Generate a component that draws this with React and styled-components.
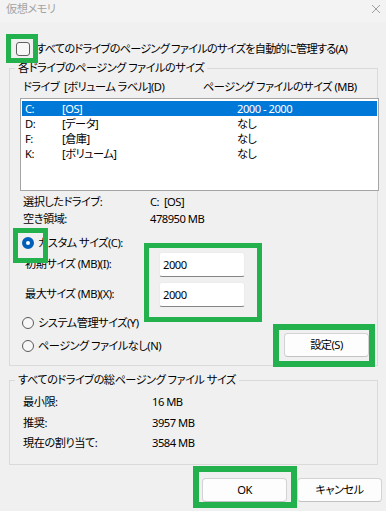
import styled, { createGlobalStyle } from "styled-components";

const Global = createGlobalStyle`
  html, body {
    margin: 0;
    padding: 0;
    background: #f0f0f0;
  }
  * {
    box-sizing: border-box;
  }
`;

const Window = styled.div`
  position: relative;
  width: 386px;
  height: 511px;
  overflow: hidden;
  background: #f0f0f0;
  color: #000;
  font-family: "Noto Sans", "Noto Sans CJK JP", sans-serif;
  font-size: 11.2px;
  font-feature-settings: "palt";
  letter-spacing: -0.5px;
  line-height: 16px;
  white-space: nowrap;
`;

const TitleBar = styled.div`
  height: 22px;
  background: #f3f3f3;
  display: flex;
  align-items: center;
  justify-content: space-between;
  padding: 0 5px 4px 6px;
  color: #a3a3a3;
`;

const Body = styled.div`
  padding: 0 7px 0 9px;
`;

const CheckRow = styled.label`
  display: flex;
  align-items: center;
  gap: 6px;
  height: 17px;
  margin-top: 18px;
  padding-left: 7px;
  letter-spacing: -0.75px;
`;

const CheckBox = styled.span`
  width: 14px;
  height: 14px;
  border: 1px solid #606060;
  border-radius: 3px;
  background: #f7f7f7;
  flex: none;
`;

const Group = styled.fieldset`
  margin: ${p => p.$top}px 0 0;
  padding: 0 0 ${p => p.$bottom || 0}px;
  width: 369px;
  border: 1px solid #dadada;
  min-width: 0;
`;

const Legend = styled.legend`
  margin-left: 5px;
  padding: 0 3px;
  line-height: 16px;
`;

const HeaderRow = styled.div`
  display: flex;
  height: 16px;
  margin-top: 3px;
  padding-left: 13px;
`;

const HeaderCell = styled.span`
  width: ${p => p.$w}px;
  flex: none;
`;

const ListBox = styled.div`
  margin: 3px 0 0 10px;
  width: 359px;
  height: 93px;
  background: #fff;
  border: 1px solid #a5a5a5;
  padding: 2px 1px;
`;

const ListRow = styled.div`
  display: flex;
  align-items: center;
  height: 15px;
  line-height: 14px;
  padding-left: 3px;
  background: ${p => (p.$selected ? "#0078d7" : "transparent")};
  color: ${p => (p.$selected ? "#fff" : "#000")};
`;

const ListCell = styled.span`
  width: ${p => p.$w}px;
  flex: none;
`;

const InfoBlock = styled.div`
  margin-top: 2px;
`;

const InfoRow = styled.div`
  display: flex;
  height: ${p => p.$h || 17}px;
  align-items: center;
  padding-left: 13px;
`;

const InfoLabel = styled.span`
  width: ${p => p.$w}px;
  flex: none;
`;

const RadioRow = styled.label`
  display: flex;
  align-items: center;
  gap: 4px;
  height: 16px;
  margin-top: ${p => p.$top || 0}px;
  padding-left: 12px;
`;

const Radio = styled.span`
  width: 12px;
  height: 12px;
  border-radius: 50%;
  flex: none;
  ${p =>
    p.$checked
      ? `
    background: #fff;
    border: 4px solid #005fb8;
  `
      : `
    background: #f7f7f7;
    border: 1px solid #5a5a5a;
  `}
`;

const SizeRow = styled.div`
  display: flex;
  align-items: center;
  height: 25px;
  margin-top: ${p => p.$top}px;
  padding-left: 15px;
`;

const SizeLabel = styled.span`
  width: 134px;
  flex: none;
  margin-top: -2px;
`;

const TextBox = styled.div`
  width: 86px;
  height: 25px;
  background: #fff;
  border: 1px solid #ececec;
  border-bottom: 1px solid #858585;
  border-radius: 3px;
  padding-left: 3px;
  display: flex;
  align-items: center;
`;

const OptionsRow = styled.div`
  display: flex;
  justify-content: space-between;
  align-items: flex-end;
  padding-right: 8px;
  margin-top: 8px;
`;

const RadioColumn = styled.div`
  display: flex;
  flex-direction: column;
  gap: 7px;
  padding-bottom: 3px;
`;

const Button = styled.button`
  width: 85px;
  height: 24px;
  font: inherit;
  letter-spacing: inherit;
  color: #000;
  background: #fdfdfd;
  border: 1px solid #d3d3d3;
  border-bottom-color: #c2c2c2;
  border-radius: 4px;
  padding: 0;
`;

const Footer = styled.div`
  display: flex;
  justify-content: flex-end;
  gap: 10px;
  margin: 13px -3px 0 0;
`;

const Highlight = styled.div`
  position: absolute;
  left: ${p => p.$x}px;
  top: ${p => p.$y}px;
  width: ${p => p.$w}px;
  height: ${p => p.$h}px;
  border: ${p => p.$t}px solid #22b14c;
  pointer-events: none;
`;

const drives = [
  { id: "C:", label: "[OS]", size: "2000 - 2000", selected: true },
  { id: "D:", label: "[データ]", size: "なし" },
  { id: "F:", label: "[倉庫]", size: "なし" },
  { id: "K:", label: "[ボリューム]", size: "なし" },
];

const totals = [
  ["最小限:", "16 MB"],
  ["推奨:", "3957 MB"],
  ["現在の割り当て:", "3584 MB"],
];

export default function App() {
  return (
    <Window>
      <Global />
      <TitleBar>
        <span>仮想メモリ</span>
        <svg width="10" height="10" viewBox="0 0 10 10">
          <path d="M1 1L9 9M9 1L1 9" stroke="#a0a0a0" strokeWidth="1" />
        </svg>
      </TitleBar>
      <Body>
        <CheckRow>
          <CheckBox />
          すべてのドライブのページング ファイルのサイズを自動的に管理する(A)
        </CheckRow>

        <Group $top={3}>
          <Legend>各ドライブのページング ファイルのサイズ</Legend>
          <HeaderRow>
            <HeaderCell $w={180}>ドライブ&nbsp;&nbsp;[ボリューム ラベル](D)</HeaderCell>
            <HeaderCell>ページング ファイルのサイズ (MB)</HeaderCell>
          </HeaderRow>
          <ListBox>
            {drives.map(d => (
              <ListRow key={d.id} $selected={d.selected}>
                <ListCell $w={37}>{d.id}</ListCell>
                <ListCell $w={175}>{d.label}</ListCell>
                <ListCell>{d.size}</ListCell>
              </ListRow>
            ))}
          </ListBox>
          <InfoBlock>
            <InfoRow>
              <InfoLabel $w={127}>選択したドライブ:</InfoLabel>
              <span>C:&nbsp;&nbsp;[OS]</span>
            </InfoRow>
            <InfoRow>
              <InfoLabel $w={127}>空き領域:</InfoLabel>
              <span>478950 MB</span>
            </InfoRow>
          </InfoBlock>
          <RadioRow $top={8}>
            <Radio $checked />
            カスタム サイズ(C):
          </RadioRow>
          <SizeRow $top={1}>
            <SizeLabel>初期サイズ (MB)(I):</SizeLabel>
            <TextBox>2000</TextBox>
          </SizeRow>
          <SizeRow $top={5}>
            <SizeLabel>最大サイズ (MB)(X):</SizeLabel>
            <TextBox>2000</TextBox>
          </SizeRow>
          <OptionsRow>
            <RadioColumn>
              <RadioRow>
                <Radio />
                システム管理サイズ(Y)
              </RadioRow>
              <RadioRow>
                <Radio />
                ページング ファイルなし(N)
              </RadioRow>
            </RadioColumn>
            <Button>設定(S)</Button>
          </OptionsRow>
          <div style={{ height: 8 }} />
        </Group>

        <Group $top={6} $bottom={10}>
          <Legend>すべてのドライブの総ページング ファイル サイズ</Legend>
          <div style={{ height: 4 }} />
          {totals.map(([label, value]) => (
            <InfoRow key={label} $h={20.5}>
              <InfoLabel $w={129}>{label}</InfoLabel>
              <span>{value}</span>
            </InfoRow>
          ))}
        </Group>

        <Footer>
          <Button>OK</Button>
          <Button>キャンセル</Button>
        </Footer>
      </Body>

      <Highlight $x={6} $y={34} $w={32} $h={29} $t={5} />
      <Highlight $x={13} $y={228} $w={35} $h={35} $t={5} />
      <Highlight $x={144} $y={243} $w={118} $h={79} $t={5} />
      <Highlight $x={273} $y={324} $w={102} $h={43} $t={6} />
      <Highlight $x={193} $y={466} $w={104} $h={42} $t={6} />
    </Window>
  );
}
